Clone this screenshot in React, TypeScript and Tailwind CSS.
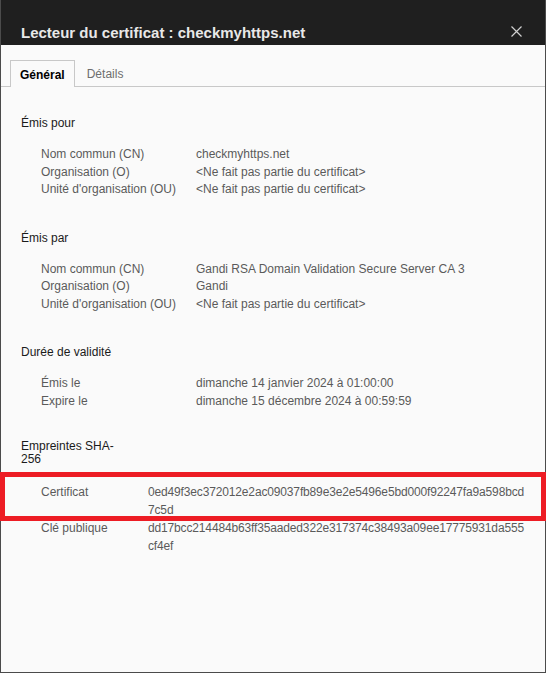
import React from "react";

type Row = { label: string; value: string };

const issuedTo: Row[] = [
  { label: "Nom commun (CN)", value: "checkmyhttps.net" },
  { label: "Organisation (O)", value: "<Ne fait pas partie du certificat>" },
  { label: "Unité d'organisation (OU)", value: "<Ne fait pas partie du certificat>" },
];

const issuedBy: Row[] = [
  { label: "Nom commun (CN)", value: "Gandi RSA Domain Validation Secure Server CA 3" },
  { label: "Organisation (O)", value: "Gandi" },
  { label: "Unité d'organisation (OU)", value: "<Ne fait pas partie du certificat>" },
];

const validity: Row[] = [
  { label: "Émis le", value: "dimanche 14 janvier 2024 à 01:00:00" },
  { label: "Expire le", value: "dimanche 15 décembre 2024 à 00:59:59" },
];

function Rows({ rows }: { rows: Row[] }) {
  return (
    <div className="ml-[20px] mt-[15px] grid grid-cols-[155px_1fr] leading-[17.5px] text-[#5a5a5a]">
      {rows.map((r) => (
        <React.Fragment key={r.label}>
          <span>{r.label}</span>
          <span>{r.value}</span>
        </React.Fragment>
      ))}
    </div>
  );
}

export default function App() {
  return (
    <div className="w-[547px] h-[673px] bg-white font-['Liberation_Sans',Arial,sans-serif] text-[12px]">
      <div className="w-[546px] h-full flex flex-col border-x border-b border-[#4b4b4b] bg-[#fafafa]">
        {/* Title bar */}
        <div className="h-[45px] shrink-0 bg-[#1f1f1f] flex items-start justify-between pl-[20px] pr-[23px] pt-[23px]">
          <h1 className="text-[15px] leading-[20px] font-bold text-[#e8e8e8]">
            Lecteur du certificat : checkmyhttps.net
          </h1>
          <svg width="11" height="11" viewBox="0 0 11 11" className="mt-[3px]">
            <path d="M0.5 0.5 L10.5 10.5 M10.5 0.5 L0.5 10.5" stroke="#d0d0d0" strokeWidth="1.2" />
          </svg>
        </div>

        {/* Tabs */}
        <div className="h-[42px] shrink-0 flex items-end border-b border-[#c8c8c8] pl-[9px]">
          <div className="h-[27px] -mb-px flex items-center pt-[1px] px-[9px] border border-b-0 border-[#c8c8c8] bg-[#fafafa] font-bold text-black">
            Général
          </div>
          <div className="h-[26px] flex items-center pt-[1px] pl-[12px] text-[#6e6e6e]">Détails</div>
        </div>

        {/* Content */}
        <div className="pl-[20px] pt-[28px]">
          <h2 className="leading-[16px] text-[#1a1a1a]">Émis pour</h2>
          <Rows rows={issuedTo} />

          <h2 className="mt-[31px] leading-[16px] text-[#1a1a1a]">Émis par</h2>
          <Rows rows={issuedBy} />

          <h2 className="mt-[31px] leading-[16px] text-[#1a1a1a]">Durée de validité</h2>
          <Rows rows={validity} />

          <h2 className="mt-[30px] leading-[13px] text-[#1a1a1a]">
            Empreintes SHA-
            <br />
            256
          </h2>
          <div className="relative ml-[20px] mt-[17px] grid grid-cols-[107px_1fr] leading-[18px] text-[#5a5a5a]">
            {/* red highlight drawn over the certificate fingerprint */}
            <div className="absolute top-[-11px] left-[-41px] w-[546px] h-[49px] border-[5px] border-[#ed1c24] pointer-events-none" />
            <span>Certificat</span>
            <span className="w-[378px] break-all tracking-[-0.15px]">
              0ed49f3ec372012e2ac09037fb89e3e2e5496e5bd000f92247fa9a598bcd7c5d
            </span>
            <span>Clé publique</span>
            <span className="w-[378px] break-all tracking-[-0.15px]">
              dd17bcc214484b63ff35aaded322e317374c38493a09ee17775931da555cf4ef
            </span>
          </div>
        </div>
      </div>
    </div>
  );
}
